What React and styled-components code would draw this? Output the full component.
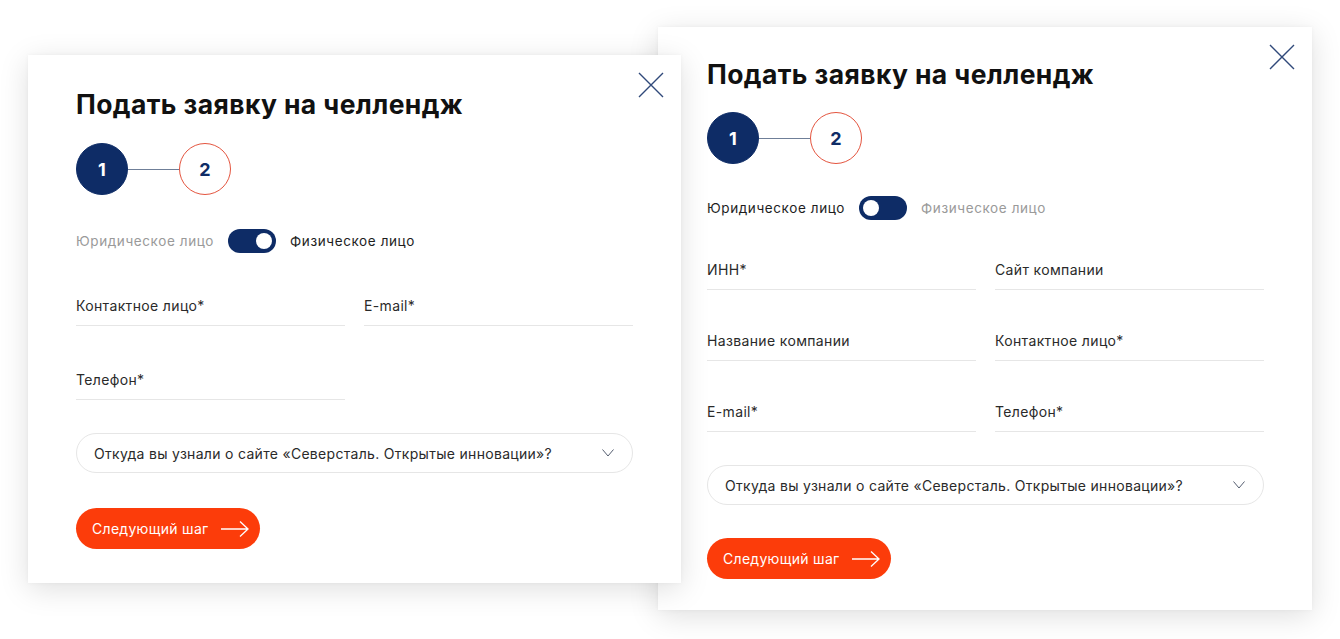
import React from "react";
import styled, { createGlobalStyle } from "styled-components";

const GlobalStyle = createGlobalStyle`
  html, body { margin: 0; padding: 0; background: #ffffff; }
  body { font-family: Inter, "Noto Sans", sans-serif; color: #1b1b1b; }
  * { box-sizing: border-box; }
`;

const NAVY = "#0e2c66";

const Canvas = styled.div`
  position: relative;
  width: 1340px;
  height: 639px;
  overflow: hidden;
  background: #fff;
`;

const Card = styled.section`
  position: absolute;
  left: ${(p) => p.$x}px;
  top: ${(p) => p.$y}px;
  width: ${(p) => p.$w}px;
  height: ${(p) => p.$h}px;
  z-index: ${(p) => p.$z};
  background: #fff;
  box-shadow: 0 6px 28px rgba(0, 0, 0, 0.13), 0 0 4px rgba(0, 0, 0, 0.04);
  padding: ${(p) => p.$padTop}px 48px 0 ${(p) => p.$padLeft}px;
  display: flex;
  flex-direction: column;
`;

const CloseButton = styled.button`
  position: absolute;
  top: 17px;
  right: 17px;
  width: 26px;
  height: 26px;
  padding: 0;
  border: 0;
  background: none;
  display: flex;
`;

const Title = styled.h2`
  margin: 0;
  font-family: Inter, sans-serif;
  font-weight: 700;
  font-size: 26.5px;
  line-height: 27px;
  letter-spacing: 0.4px;
  color: #111;
`;

const Stepper = styled.div`
  display: flex;
  align-items: center;
  margin-top: ${(p) => p.$gap}px;
`;

const StepCircle = styled.div`
  width: 52px;
  height: 52px;
  border-radius: 50%;
  display: flex;
  align-items: center;
  justify-content: center;
  font-family: Inter, sans-serif;
  font-weight: 700;
  font-size: 18px;
  background: ${(p) => (p.$active ? NAVY : "#fff")};
  color: ${(p) => (p.$active ? "#fff" : NAVY)};
  border: 1px solid ${(p) => (p.$active ? NAVY : "#e4553f")};
`;

const StepLine = styled.div`
  width: 51px;
  height: 1px;
  background: #6f7f98;
`;

const ToggleRow = styled.div`
  display: flex;
  align-items: center;
  gap: 14px;
  margin-top: ${(p) => p.$gap}px;
  height: 24px;
`;

const ToggleLabel = styled.span`
  font-family: Inter, sans-serif;
  font-size: 13.5px;
  letter-spacing: 0.6px;
  color: ${(p) => (p.$on ? "#1e1e1e" : "#9a9a9a")};
`;

const Switch = styled.div`
  width: 48px;
  height: 24px;
  border-radius: 12px;
  background: ${NAVY};
  display: flex;
  align-items: center;
  justify-content: ${(p) => (p.$right ? "flex-end" : "flex-start")};
  padding: 0 4px;
`;

const Knob = styled.div`
  width: 16px;
  height: 16px;
  border-radius: 50%;
  background: #fff;
`;

const Fields = styled.div`
  display: grid;
  grid-template-columns: 1fr 1fr;
  column-gap: 19px;
  row-gap: ${(p) => p.$rowGap}px;
  margin-top: ${(p) => p.$gap}px;
`;

const Field = styled.label`
  display: block;
  font-family: Inter, sans-serif;
  font-size: 14px;
  line-height: 20px;
  letter-spacing: 0.35px;
  color: #2a2a2a;
  padding-bottom: 9px;
  border-bottom: 1px solid #e6e6e6;
`;

const Select = styled.div`
  margin-top: ${(p) => p.$gap}px;
  height: 40px;
  border: 1px solid #e6e6e6;
  border-radius: 20px;
  display: flex;
  align-items: center;
  justify-content: space-between;
  padding: 0 18px 0 17px;
  font-family: Inter, sans-serif;
  font-size: 14px;
  letter-spacing: 0.3px;
  color: #2a2a2a;
`;

const NextButton = styled.button`
  margin-top: ${(p) => p.$gap}px;
  align-self: flex-start;
  height: 41px;
  border: 0;
  border-radius: 21px;
  background: #fc3c0a;
  color: #fff;
  display: flex;
  align-items: center;
  gap: 12px;
  padding: 0 11px 0 16px;
  font-family: Inter, sans-serif;
  font-size: 14px;
  letter-spacing: 0.3px;
`;

const CloseIcon = () => (
  <svg width="26" height="26" viewBox="0 0 26 26" fill="none">
    <path d="M1 1L25 25M25 1L1 25" stroke="#30497a" strokeWidth="1.4" />
  </svg>
);

const Chevron = () => (
  <svg width="12" height="8" viewBox="0 0 12 8" fill="none">
    <path d="M0.5 0.5L6 7L11.5 0.5" stroke="#555e70" strokeWidth="1" />
  </svg>
);

const Arrow = () => (
  <svg width="28" height="16" viewBox="0 0 28 16" fill="none">
    <path d="M0 8H27M19 0.6L27 8L19 15.4" stroke="#fff" strokeWidth="1.3" />
  </svg>
);

const SELECT_TEXT = "Откуда вы узнали о сайте «Северсталь. Открытые инновации»?";

function ApplyCard({ x, y, w, h, z, padTop, padLeft, legal, fields, sp }) {
  return (
    <Card $x={x} $y={y} $w={w} $h={h} $z={z} $padTop={padTop} $padLeft={padLeft}>
      <CloseButton aria-label="Закрыть">
        <CloseIcon />
      </CloseButton>
      <Title>Подать заявку на челлендж</Title>
      <Stepper $gap={sp.stepper}>
        <StepCircle $active>1</StepCircle>
        <StepLine />
        <StepCircle>2</StepCircle>
      </Stepper>
      <ToggleRow $gap={sp.toggle}>
        <ToggleLabel $on={legal}>Юридическое лицо</ToggleLabel>
        <Switch $right={!legal}>
          <Knob />
        </Switch>
        <ToggleLabel $on={!legal}>Физическое лицо</ToggleLabel>
      </ToggleRow>
      <Fields $gap={sp.fields} $rowGap={sp.rowGap}>
        {fields.map((f, i) =>
          f ? <Field key={i}>{f}</Field> : <div key={i} />
        )}
      </Fields>
      <Select $gap={sp.select}>
        <span>{SELECT_TEXT}</span>
        <Chevron />
      </Select>
      <NextButton $gap={sp.button}>
        Следующий шаг
        <Arrow />
      </NextButton>
    </Card>
  );
}

export default function App() {
  return (
    <>
      <GlobalStyle />
      <Canvas>
        <ApplyCard
          x={658}
          y={27}
          w={654}
          h={583}
          z={1}
          padTop={34}
          padLeft={49}
          legal={true}
          fields={["ИНН*", "Сайт компании", "Название компании", "Контактное лицо*", "E-mail*", "Телефон*"]}
          sp={{ stepper: 24, toggle: 32, fields: 40, rowGap: 41, select: 33, button: 33 }}
        />
        <ApplyCard
          x={28}
          y={55}
          w={653}
          h={528}
          z={2}
          padTop={36}
          padLeft={48}
          legal={false}
          fields={["Контактное лицо*", "E-mail*", "Телефон*", null]}
          sp={{ stepper: 25, toggle: 34, fields: 43, rowGap: 44, select: 33, button: 35 }}
        />
      </Canvas>
    </>
  );
}
